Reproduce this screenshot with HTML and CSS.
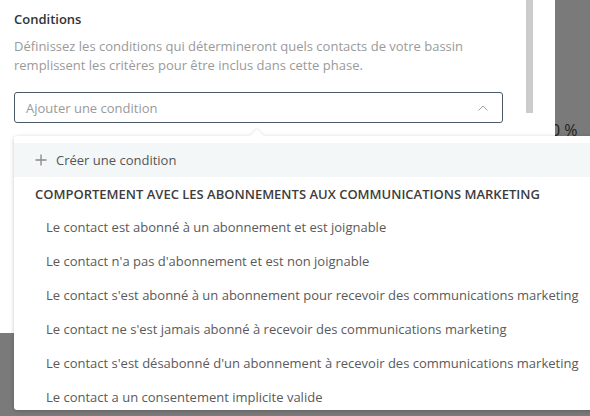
FILE: index.html
```html
<!DOCTYPE html>
<html lang="fr">
<head>
<meta charset="utf-8">
<link rel="stylesheet" href="styles.css">
</head>
<body>
<div class="stage">
  <div class="panel">
    <div class="content">
      <h2 class="title">Conditions</h2>
      <p class="desc">Définissez les conditions qui détermineront quels contacts de votre bassin remplissent les critères pour être inclus dans cette phase.</p>
      <div class="select">
        <span class="placeholder">Ajouter une condition</span>
        <svg class="chev" width="10" height="6" viewBox="0 0 10 6"><path d="M0.5 5.5 L5 1 L9.5 5.5" fill="none" stroke="#9aa0a4" stroke-width="1"/></svg>
      </div>
    </div>
    <div class="scrollbar"></div>
  </div>
  <div class="side"><span class="pct">0 %</span></div>
</div>
<div class="menu">
  <div class="caret"></div>
  <div class="create">
    <svg width="12" height="12" viewBox="0 0 12 12"><path d="M6 0.5 V11.5 M0.5 6 H11.5" stroke="#888" stroke-width="1.3"/></svg>
    <span>Créer une condition</span>
  </div>
  <div class="group">COMPORTEMENT AVEC LES ABONNEMENTS AUX COMMUNICATIONS MARKETING</div>
  <ul class="items">
    <li>Le contact est abonné à un abonnement et est joignable</li>
    <li>Le contact n'a pas d'abonnement et est non joignable</li>
    <li>Le contact s'est abonné à un abonnement pour recevoir des communications marketing</li>
    <li>Le contact ne s'est jamais abonné à recevoir des communications marketing</li>
    <li>Le contact s'est désabonné d'un abonnement à recevoir des communications marketing</li>
    <li>Le contact a un consentement implicite valide</li>
  </ul>
</div>
</body>
</html>
```
FILE: styles.css
```css
html, body {
  margin: 0;
  padding: 0;
}
body {
  width: 590px;
  height: 416px;
  overflow: hidden;
  position: relative;
  background: #7a7a7a;
  font-family: "Open Sans", "Noto Sans", sans-serif;
}
.stage {
  display: flex;
  align-items: flex-start;
}
.panel {
  width: 555px;
  height: 333px;
  background: #fff;
  display: flex;
  box-sizing: border-box;
  padding-left: 14px;
}
.content {
  width: 489px;
}
.title {
  margin: 10px 0 0;
  font-size: 13px;
  font-weight: 600;
  color: #333;
  line-height: 18px;
}
.desc {
  margin: 9px 0 0;
  font-size: 13px;
  line-height: 19px;
  color: #9a9a9a;
}
.select {
  margin-top: 17px;
  height: 31px;
  box-sizing: border-box;
  border: 1px solid #4b5a66;
  border-radius: 3px;
  display: flex;
  align-items: center;
  justify-content: space-between;
  padding: 0 14px 0 11px;
}
.placeholder {
  font-size: 13px;
  color: #9a9a9a;
}
.chev {
  display: block;
}
.scrollbar {
  margin-left: 23px;
  width: 7px;
  height: 113px;
  background: #cccccc;
}
.side {
  width: 35px;
  height: 136px;
  overflow: hidden;
  display: flex;
  align-items: flex-end;
}
.pct {
  margin-left: -4px;
  font-size: 16px;
  line-height: 20px;
  color: #222;
  white-space: nowrap;
  margin-bottom: -4px;
}
.menu {
  position: absolute;
  left: 14px;
  top: 136px;
  width: 600px;
  height: 274px;
  background: #fff;
  border-radius: 3px;
  box-shadow: 0 1px 4px rgba(0,0,0,0.22);
  padding-top: 7px;
  box-sizing: border-box;
}
.caret {
  position: absolute;
  left: 238px;
  top: -5px;
  width: 10px;
  height: 10px;
  background: #fff;
  transform: rotate(45deg);
  box-shadow: -1px -1px 2px rgba(0,0,0,0.08);
}
.create {
  position: relative;
  height: 34px;
  background: #f4f7f8;
  display: flex;
  align-items: center;
  padding-left: 21px;
  gap: 9px;
  font-size: 13px;
  color: #555;
}
.group {
  margin-top: 8px;
  padding-left: 21px;
  height: 19px;
  line-height: 19px;
  font-size: 13px;
  font-weight: 600;
  color: #3d3d3d;
}
.items {
  list-style: none;
  margin: 6px 0 0;
  padding: 0;
}
.items li {
  padding-left: 32px;
  height: 34px;
  line-height: 34px;
  font-size: 13px;
  color: #5a5a5a;
  white-space: nowrap;
}
```
